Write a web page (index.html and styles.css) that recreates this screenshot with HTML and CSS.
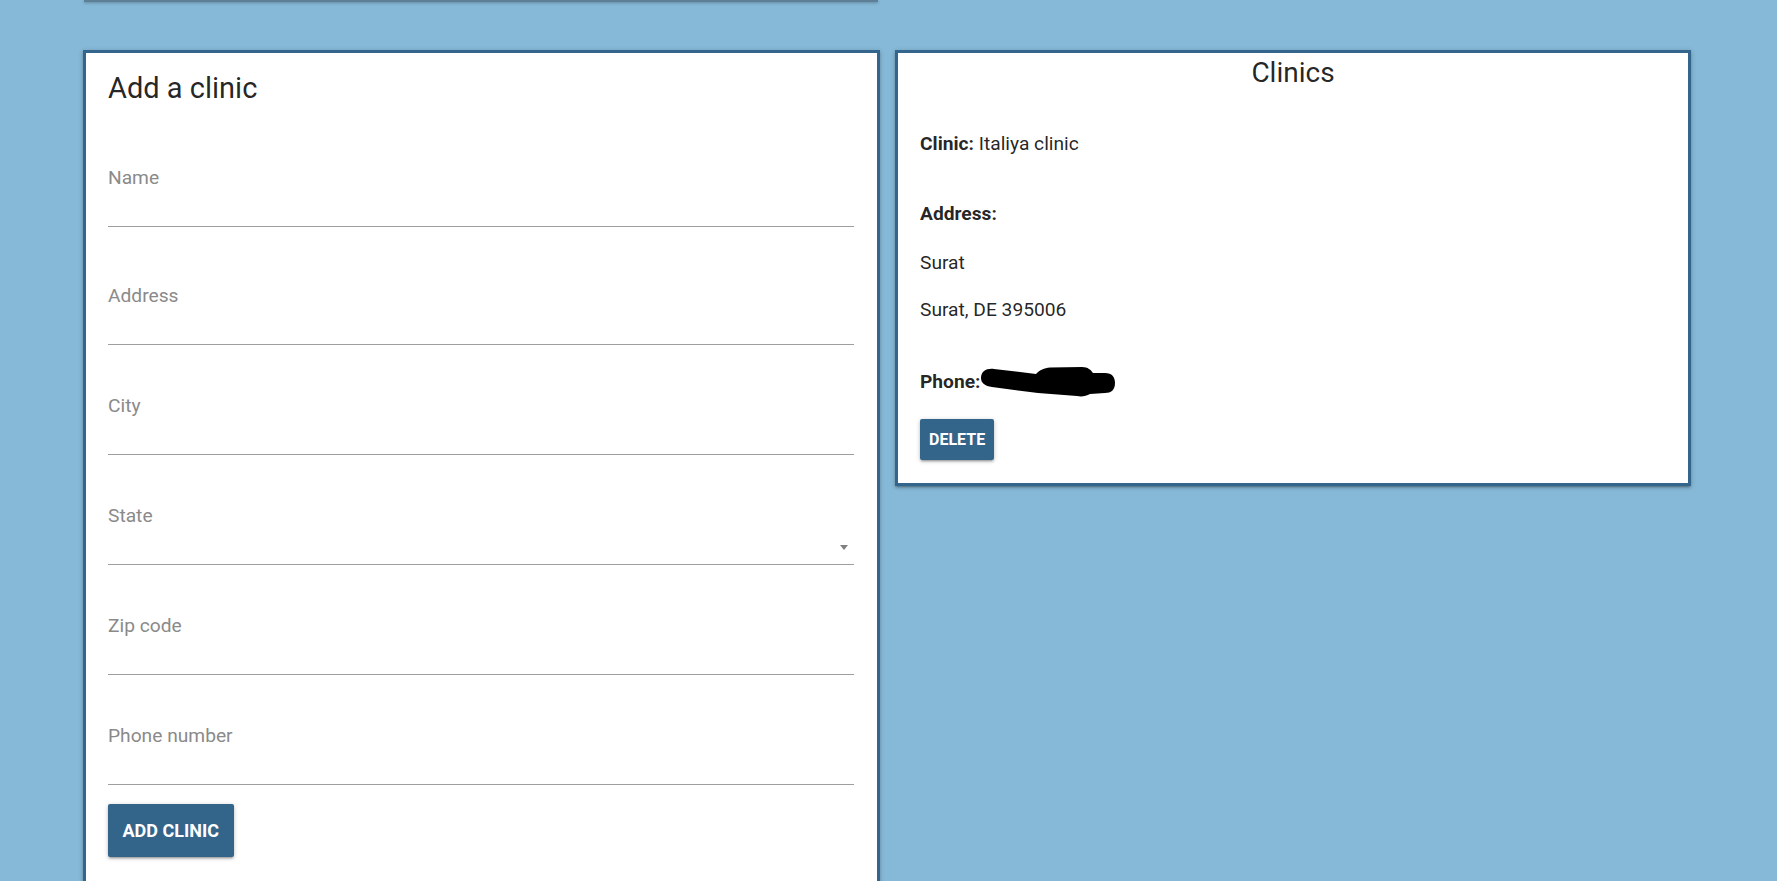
FILE: index.html
```html
<!DOCTYPE html>
<html lang="en">
<head>
<meta charset="utf-8">
<title>Clinics</title>
<link rel="stylesheet" href="styles.css">
</head>
<body>
<div class="page">
  <div class="top-card"></div>
  <div class="row">
    <section class="card form-card">
      <h2 class="card-title form-title">Add a clinic</h2>
      <form class="clinic-form">
        <div class="field">
          <label class="field-label">Name</label>
          <div class="field-input"></div>
        </div>
        <div class="field field-wide-gap">
          <label class="field-label">Address</label>
          <div class="field-input"></div>
        </div>
        <div class="field">
          <label class="field-label">City</label>
          <div class="field-input"></div>
        </div>
        <div class="field">
          <label class="field-label">State</label>
          <div class="field-input select-input"><span class="caret"></span></div>
        </div>
        <div class="field">
          <label class="field-label">Zip code</label>
          <div class="field-input"></div>
        </div>
        <div class="field">
          <label class="field-label">Phone number</label>
          <div class="field-input"></div>
        </div>
        <button type="button" class="btn btn-large">ADD CLINIC</button>
      </form>
    </section>
    <section class="card list-card">
      <h2 class="card-title centered">Clinics</h2>
      <p class="line clinic-line"><b>Clinic:</b> Italiya clinic</p>
      <p class="line address-head"><b>Address:</b></p>
      <p class="line street">Surat</p>
      <p class="line city-line">Surat, DE 395006</p>
      <p class="line phone-line"><b>Phone:</b>
        <svg class="redact" width="140" height="34" viewBox="0 0 140 34" aria-hidden="true">
          <path d="M3 13 C3 6 9 3 16 4 L58 9 C62 5 66 3 72 2.5 L104 2 C110 2 113 5 115 8 L127 8 C134 8 137 12 137 18 C137 25 133 28 127 28 L112 29 C108 31 104 32 99 31 L60 28 L14 22 C7 21 3 18 3 13 Z" fill="#000"/>
        </svg>
      </p>
      <button type="button" class="btn btn-small">DELETE</button>
    </section>
  </div>
</div>
</body>
</html>
```
FILE: styles.css
```css
html, body {
  margin: 0;
  padding: 0;
}
body {
  background: #86b9d7;
  font-family: Roboto, "Liberation Sans", Arial, sans-serif;
  color: rgba(0, 0, 0, 0.87);
}
.page {
  padding-left: 83px;
}
.top-card {
  width: 794px;
  height: 2px;
  margin-left: 1px;
  background: #5d7f98;
  box-shadow: 0 1px 3px rgba(0, 0, 0, 0.3);
}
.row {
  display: flex;
  align-items: flex-start;
  gap: 15px;
  margin-top: 48px;
}
.card {
  box-sizing: border-box;
  background: #fff;
  border: 3px solid #34668d;
  box-shadow: 0 2px 2px 0 rgba(0,0,0,.14), 0 3px 1px -2px rgba(0,0,0,.12), 0 1px 5px 0 rgba(0,0,0,.2);
}
.form-card {
  width: 797px;
  padding: 19px 23px 24px 22px;
}
.list-card {
  width: 796px;
  padding: 4px 22px 23px 22px;
}
.card-title {
  margin: 0;
  font-size: 28px;
  line-height: 32px;
  font-weight: 400;
}
.form-title {
  font-size: 29px;
}
.centered {
  text-align: center;
}
.clinic-form {
  display: flex;
  flex-direction: column;
  align-items: flex-start;
}
.field {
  width: 100%;
  margin-top: 49px;
}
.field:first-child {
  margin-top: 62px;
}
.field-wide-gap {
  margin-top: 57px;
}
.field-label {
  display: block;
  font-size: 19.2px;
  line-height: 24px;
  color: #8a8a8a;
}
.field-input {
  height: 36px;
  border-bottom: 1px solid #9e9e9e;
}
.select-input {
  display: flex;
  justify-content: flex-end;
  align-items: center;
  padding-right: 6px;
}
.caret {
  width: 0;
  height: 0;
  border-left: 4.5px solid transparent;
  border-right: 4.5px solid transparent;
  border-top: 5px solid #808080;
  margin-top: 3px;
}
.btn {
  border: none;
  background: #33658b;
  color: #fff;
  font-family: Roboto, "Liberation Sans", Arial, sans-serif;
  font-weight: 700;
  border-radius: 2px;
  box-shadow: 0 2px 2px 0 rgba(0,0,0,.14), 0 3px 1px -2px rgba(0,0,0,.12), 0 1px 5px 0 rgba(0,0,0,.2);
  cursor: pointer;
  display: block;
}
.btn-large {
  margin-top: 19px;
  height: 53px;
  line-height: 53px;
  padding: 0 14.5px;
  font-size: 18px;
}
.btn-small {
  margin-top: 25px;
  height: 41px;
  line-height: 41px;
  padding: 0 9px;
  font-size: 16px;
}
.line {
  margin: 0;
  font-size: 19.2px;
  line-height: 24px;
}
.line b {
  font-weight: 700;
}
.clinic-line {
  margin-top: 43px;
}
.address-head {
  margin-top: 46px;
}
.street {
  margin-top: 25px;
}
.city-line {
  margin-top: 23px;
}
.phone-line {
  margin-top: 48px;
  position: relative;
}
.redact {
  position: absolute;
  left: 58px;
  top: -5px;
}
```
